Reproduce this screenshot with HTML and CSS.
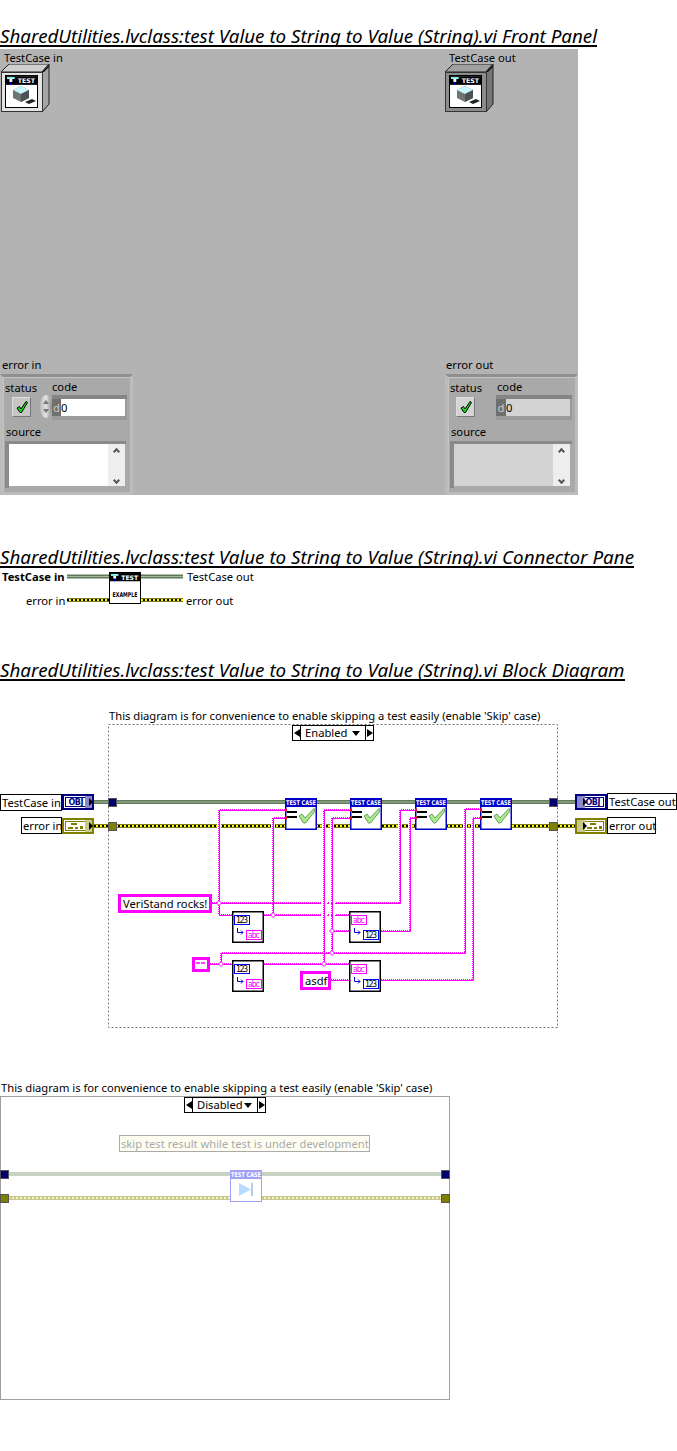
FILE: index.html
```html
<!DOCTYPE html>
<html lang="en">
<head>
<meta charset="utf-8">
<title>SharedUtilities.lvclass:test Value to String to Value (String).vi</title>
<link rel="stylesheet" href="styles.css">
</head>
<body>
<svg class="defs" width="0" height="0" aria-hidden="true">
  <defs>
    <symbol id="ticon" viewBox="0 0 32 9">
      <rect width="32" height="9" fill="#000"/>
      <rect x="1" y="1" width="8" height="2" fill="#9ff"/>
      <rect x="3.500" y="3" width="3" height="3" fill="#fff"/>
      <rect x="3.500" y="6" width="2" height="3" fill="#00c"/>
      <text x="12" y="7" class="micro" fill="#fff" textLength="18" lengthAdjust="spacingAndGlyphs">TEST</text>
    </symbol>
    <symbol id="box3d" viewBox="0 0 49 48">
      <path d="M0 8 8 0H48L41 8Z" class="box-top" stroke="#222"/>
      <path d="M41 8 48 0V40L41 48Z" class="box-side" stroke="#222"/>
      <path d="M41 8 48 1V3L43 8Z" fill="#111"/>
      <rect x=".5" y="8.500" width="41" height="39" class="box-face" stroke="#333"/>
      <rect x="4.500" y="11.500" width="32" height="32" fill="#fff" stroke="#000"/>
      <use href="#ticon" x="5" y="12" width="31" height="9"/>
      <path d="M20 22 28 26V34L20 38 12 34V26Z" fill="#6f7474"/>
      <path d="M20 22 28 26 20 30 12 26Z" fill="#c6f7fb"/>
      <path d="M20 30 28 26V34L20 38Z" fill="#4d5252"/>
      <path d="M24 38 31 35 35 37 28 40Z" fill="#222"/>
    </symbol>
    <symbol id="node-tc" viewBox="0 0 32 32">
      <rect x=".75" y=".75" width="30.500" height="30.500" fill="#fff" stroke="#0000c8" stroke-width="1.500"/>
      <rect width="32" height="9" fill="#0000c8"/>
      <text x="16" y="7" class="micro" text-anchor="middle" fill="#fff" textLength="30" lengthAdjust="spacingAndGlyphs">TEST CASE</text>
      <rect x="2" y="13" width="10" height="2" fill="#000"/>
      <rect x="2" y="18" width="10" height="2" fill="#000"/>
      <path d="M14 18 17 16 20 20 29 10.500 30 13 20.500 25H18.500Z" fill="#a6ea8a" stroke="#6f9a60"/>
      <rect x="0" y="10.500" width="2" height="3" fill="#f00"/>
      <rect x="0" y="18.500" width="2" height="3" fill="#f00"/>
    </symbol>
    <symbol id="node-num" viewBox="0 0 32 32">
      <rect x=".75" y=".75" width="30.500" height="30.500" fill="#fff" stroke="#000" stroke-width="1.500"/>
      <rect x="2.500" y="4.500" width="15" height="9" fill="#fff" stroke="#00f"/>
      <text x="10" y="12" class="tiny" text-anchor="middle" fill="#000" textLength="12">123</text>
      <rect x="14.500" y="19.500" width="15" height="9" fill="#fff" stroke="#f0f"/>
      <text x="22" y="27" class="tiny" text-anchor="middle" fill="#f0f" textLength="12">abc</text>
      <path d="M5.500 17V21.500H11M9 19.500 11 21.500 9 23.500" fill="none" stroke="#00c"/>
    </symbol>
    <symbol id="node-str" viewBox="0 0 32 32">
      <rect x=".75" y=".75" width="30.500" height="30.500" fill="#fff" stroke="#000" stroke-width="1.500"/>
      <rect x="2.500" y="4.500" width="15" height="9" fill="#fff" stroke="#f0f"/>
      <text x="10" y="12" class="tiny" text-anchor="middle" fill="#f0f" textLength="12">abc</text>
      <rect x="14.500" y="19.500" width="15" height="9" fill="#fff" stroke="#00f"/>
      <text x="22" y="27" class="tiny" text-anchor="middle" fill="#000" textLength="12">123</text>
      <path d="M5.500 17V21.500H11M9 19.500 11 21.500 9 23.500" fill="none" stroke="#00c"/>
    </symbol>
    <symbol id="term-obj" viewBox="0 0 32 16">
      <rect x="1" y="1" width="30" height="14" fill="#fff" stroke="#000080" stroke-width="2"/>
      <rect x="3.500" y="3.500" width="21" height="9" fill="#fff" stroke="#000080"/>
      <rect x="23" y="2" width="7" height="12" fill="#8a8ac8"/>
      <text x="14" y="11" class="micro obj" text-anchor="middle" fill="#000080" textLength="15">OBJ</text>
      <path d="M27 4 31 8 27 12Z" fill="#000"/>
    </symbol>
    <symbol id="term-obj-out" viewBox="0 0 32 16">
      <rect x="1" y="1" width="30" height="14" fill="#fff" stroke="#000080" stroke-width="2"/>
      <rect x="7.500" y="3.500" width="21" height="9" fill="#fff" stroke="#000080"/>
      <rect x="2" y="2" width="8" height="12" fill="#8a8ac8"/>
      <text x="18" y="11" class="micro obj" text-anchor="middle" fill="#000080" textLength="15">OBJ</text>
      <path d="M8 4 12 8 8 12Z" fill="#000"/>
    </symbol>
    <symbol id="term-err" viewBox="0 0 32 16">
      <rect x="1" y="1" width="30" height="14" fill="#fff" stroke="#808000" stroke-width="2"/>
      <rect x="3.500" y="3.500" width="21" height="9" fill="#fff" stroke="#808000"/>
      <rect x="23" y="2" width="7" height="12" fill="#c8c88a"/>
      <path d="M9 5H15V7H9ZM6 9H11V11H6ZM13 9H16V11H13ZM18 8H21V11H18Z" fill="#808000"/>
      <path d="M27 4 31 8 27 12Z" fill="#000"/>
    </symbol>
    <symbol id="term-err-out" viewBox="0 0 32 16">
      <rect x="1" y="1" width="30" height="14" fill="#fff" stroke="#808000" stroke-width="2"/>
      <rect x="7.500" y="3.500" width="21" height="9" fill="#fff" stroke="#808000"/>
      <rect x="2" y="2" width="8" height="12" fill="#c8c88a"/>
      <path d="M15 5H21V7H15ZM12 9H17V11H12ZM19 9H22V11H19ZM24 8H27V11H24Z" fill="#808000"/>
      <path d="M8 4 12 8 8 12Z" fill="#000"/>
    </symbol>
    <symbol id="check" viewBox="0 0 12 12">
      <path d="M1 7 3.500 5.500 5 8 10 0.500 11.500 1.500 5.500 11.500H4Z" fill="#10e010" stroke="#000"/>
    </symbol>
    <path id="pink" d="M212 903H400V810H415M219 903V810H285M219 903V915H232M264 915H349M273 915V818H285M381 931H410V818H415M332 931H349M332 953V818H350M210 964H232M221 964V953H465V809H480M264 964H349M324 964V810H350M331 980H349M381 980H473V818H480"/>
  </defs>
</svg>

<h2 class="title"><span>SharedUtilities.lvclass:test Value to String to Value (String).vi Front Panel</span></h2>
<section class="panel">
  <div class="lbl lbl-tin">TestCase in</div>
  <svg class="box box-in"><use href="#box3d"/></svg>
  <div class="lbl lbl-tout">TestCase out</div>
  <svg class="box box-out"><use href="#box3d"/></svg>

  <div class="lbl lbl-ein">error in</div>
  <div class="cluster cluster-in">
    <div class="lbl c-status">status</div>
    <div class="lbl c-code">code</div>
    <div class="led"><svg class="check"><use href="#check"/></svg></div>
    <div class="spin"><i class="spin-up"></i><i class="spin-down"></i></div>
    <div class="numeric"><span class="radix">d</span><span class="value">0</span></div>
    <div class="lbl c-source">source</div>
    <div class="strbox"><div class="scroll"><i class="up"></i><i class="down"></i></div></div>
  </div>

  <div class="lbl lbl-eout">error out</div>
  <div class="cluster cluster-out">
    <div class="lbl c-status">status</div>
    <div class="lbl c-code">code</div>
    <div class="led"><svg class="check"><use href="#check"/></svg></div>
    <div class="numeric"><span class="radix">d</span><span class="value">0</span></div>
    <div class="lbl c-source">source</div>
    <div class="strbox"><div class="scroll"><i class="up"></i><i class="down"></i></div></div>
  </div>
</section>

<h2 class="title title-2"><span>SharedUtilities.lvclass:test Value to String to Value (String).vi Connector Pane</span></h2>
<section class="pane">
  <svg class="wires" viewBox="0 568 677 44">
    <path class="w-class" d="M67 576.500H183"/><path class="w-class-in" d="M67 576.500H183"/>
    <path class="w-err" d="M67 600H183"/><path class="w-err-y" d="M67 600H183"/><path class="w-err-k" d="M67 600H183"/>
    <rect x="109.500" y="572.500" width="31" height="31" fill="#fff" stroke="#000"/>
    <use href="#ticon" x="110" y="573" width="30" height="8.500"/>
    <text x="125" y="597" class="micro" text-anchor="middle" fill="#000" textLength="25" lengthAdjust="spacingAndGlyphs">EXAMPLE</text>
  </svg>
  <div class="lbl p-tin">TestCase in</div>
  <div class="lbl p-tout">TestCase out</div>
  <div class="lbl p-ein">error in</div>
  <div class="lbl p-eout">error out</div>
</section>

<h2 class="title title-3"><span>SharedUtilities.lvclass:test Value to String to Value (String).vi Block Diagram</span></h2>
<section class="diagram d-enabled">
  <svg class="wires" viewBox="0 700 677 340">
    <rect x="108.500" y="724.500" width="449" height="303" fill="none" stroke="#777" stroke-dasharray="2 2"/>
    <path class="w-class" d="M94 802H575"/><path class="w-class-in" d="M94 802H575"/>
    <path class="w-err" d="M94 826H575"/><path class="w-err-y" d="M94 826H575"/><path class="w-err-k" d="M94 826H575"/>
    <path class="w-gap" d="M219 822V830M273 822V830M324 822V830M332 822V830M400 822V830M410 822V830M465 822V830M473 822V830"/>
    <use href="#pink" class="p-solid" transform="translate(.5 .5)"/>
    <use href="#pink" class="p-dot"/>
    <path class="w-gap-h" d="M321 903H323M325 903H327M329 903H331M333 903H335M321 915H323M325 915H327M329 915H331M333 915H335"/>
    <g class="junctions">
      <path d="M219 900.500 221.500 903 219 905.500 216.500 903Z"/>
      <path d="M273 912.500 275.500 915 273 917.500 270.500 915Z"/>
      <path d="M332 928.500 334.500 931 332 933.500 329.500 931Z"/>
      <path d="M332 950.500 334.500 953 332 955.500 329.500 953Z"/>
      <path d="M221 961.500 223.500 964 221 966.500 218.500 964Z"/>
      <path d="M324 961.500 326.500 964 324 966.500 321.500 964Z"/>
    </g>
    <rect class="t-navy" x="108.500" y="798.500" width="8" height="8"/>
    <rect class="t-olive" x="108.500" y="822.500" width="8" height="8"/>
    <rect class="t-navy" x="549.500" y="798.500" width="8" height="8"/>
    <rect class="t-olive" x="549.500" y="822.500" width="8" height="8"/>
    <use href="#node-tc" x="285" y="798" width="32" height="32"/>
    <use href="#node-tc" x="350" y="798" width="32" height="32"/>
    <use href="#node-tc" x="415" y="798" width="32" height="32"/>
    <use href="#node-tc" x="480" y="798" width="32" height="32"/>
    <use href="#node-num" x="232" y="911" width="32" height="32"/>
    <use href="#node-num" x="232" y="960" width="32" height="32"/>
    <use href="#node-str" x="349" y="911" width="32" height="32"/>
    <use href="#node-str" x="349" y="960" width="32" height="32"/>
    <use href="#term-obj" x="62" y="794" width="32" height="16"/>
    <use href="#term-err" x="62" y="818" width="32" height="16"/>
    <use href="#term-obj-out" x="575" y="794" width="32" height="16"/>
    <use href="#term-err-out" x="575" y="818" width="32" height="16"/>
    <rect x="193.500" y="958.500" width="15" height="12" fill="#fff" stroke="#f0f" stroke-width="3"/>
    <path d="M197 962V964M199 962V964M202 962V964M204 962V964" stroke="#f0f" stroke-width="1.500"/>
  </svg>
  <div class="lbl note n-1">This diagram is for convenience to enable skipping a test easily (enable 'Skip' case)</div>
  <div class="selector sel-1"><i class="prev"></i><b>Enabled<i class="drop"></i></b><i class="next"></i></div>
  <div class="tag t-tin">TestCase in</div>
  <div class="tag t-ein">error in</div>
  <div class="tag t-tout">TestCase out</div>
  <div class="tag t-eout">error out</div>
  <div class="const c-vs">VeriStand rocks!</div>
  <div class="const c-as">asdf</div>
</section>

<section class="diagram d-disabled">
  <svg class="wires" viewBox="0 1075 677 330">
    <rect x=".5" y="1096.500" width="449" height="303" fill="#fff" stroke="#a0a0a0"/>
    <path class="w-pale" d="M8 1174H442"/>
    <path class="w-pale-e" d="M8 1198H442"/><path class="w-pale-k" d="M8 1198H442"/>
    <rect class="t-navy" x=".5" y="1170.500" width="8" height="8"/>
    <rect class="t-olive" x=".5" y="1194.500" width="8" height="8"/>
    <rect class="t-navy" x="441.500" y="1170.500" width="8" height="8"/>
    <rect class="t-olive" x="441.500" y="1194.500" width="8" height="8"/>
    <rect x="230.500" y="1170.500" width="31" height="31" fill="#fff" stroke="#a0a0f4"/>
    <rect x="230" y="1170" width="32" height="9" fill="#a0a0f4"/>
    <text x="246" y="1177" class="micro" text-anchor="middle" fill="#fff" textLength="30" lengthAdjust="spacingAndGlyphs">TEST CASE</text>
    <path d="M239 1183 251 1189.500 239 1196Z" fill="#b8dcff"/>
    <rect x="251" y="1183" width="2" height="13" fill="#b8c8f0"/>
  </svg>
  <div class="lbl note n-2">This diagram is for convenience to enable skipping a test easily (enable 'Skip' case)</div>
  <div class="selector sel-2"><i class="prev"></i><b>Disabled<i class="drop"></i></b><i class="next"></i></div>
  <div class="skip">skip test result while test is under development</div>
</section>
</body>
</html>
```
FILE: styles.css
```css
* { box-sizing: border-box; }
html, body { margin: 0; padding: 0; background: #fff; }
body {
  width: 677px;
  height: 1451px;
  overflow: hidden;
  padding-top: 26px;
  color: #000;
  font-family: "Noto Sans", "Open Sans", sans-serif;
  font-size: 11.200px;
}
.defs { position: absolute; }

.title {
  margin: 0;
  height: 21px;
  font-size: 18.800px;
  font-style: italic;
  font-weight: 400;
  line-height: 20px;
  white-space: nowrap;
}
.title span { display: inline-block; height: 21px; border-bottom: 2px solid #000; }
.title-2 { margin-top: 52px; }
.title-3 { margin-top: 48px; }

.lbl { position: absolute; white-space: nowrap; line-height: 14px; }

/* front panel */
.panel {
  position: relative;
  width: 578px;
  height: 446px;
  margin-top: 2px;
  background: #b3b3b3;
}
.box { position: absolute; top: 15px; width: 49px; height: 48px; --face: #e4e4e4; --side: #a5a5a5; --top: #cfcfcf; }
.box-in { left: 1px; }
.box-out { left: 445px; --face: #8c8c8c; --side: #777; --top: #a0a0a0; }
.box-top { fill: var(--top); }
.box-side { fill: var(--side); }
.box-face { fill: var(--face); }

.lbl-tin { left: 4px; top: 2px; }
.lbl-tout { left: 449px; top: 2px; }
.lbl-ein { left: 2px; top: 309px; }
.lbl-eout { left: 446px; top: 309px; }

.cluster {
  position: absolute;
  top: 325px;
  width: 133px;
  height: 121px;
  background: #a9a9a9;
  border: 3px solid;
  border-color: #8f8f8f #bcbcbc #bcbcbc #bcbcbc;
  box-shadow: inset 1px 1px 0 #c4c4c4;
}
.cluster-in { left: 0; }
.cluster-out { left: 445px; }
.c-status { left: 2px; top: 4px; }
.c-code { left: 49px; top: 3px; }
.c-source { left: 3px; top: 48px; }
.led {
  position: absolute;
  left: 9px;
  top: 20px;
  width: 19px;
  height: 20px;
  background: #c6c6c6;
  border: 1px solid;
  border-color: #dedede #777 #777 #dedede;
  display: flex;
  align-items: center;
  justify-content: center;
}
.check { width: 12px; height: 12px; }
.cluster-out .led { left: 8px; background: #d4d4d4; }
.spin {
  position: absolute;
  left: 37px;
  top: 18px;
  width: 12px;
  height: 23px;
  border-radius: 50%;
  background: linear-gradient(90deg, #bbb, #e4e4e4 50%, #8b8b8b);
  display: flex;
  flex-direction: column;
  align-items: center;
  justify-content: space-between;
  padding: 5px 0;
}
.spin-up { border: 3px solid transparent; border-top: 0; border-bottom: 4px solid #777; }
.spin-down { border: 3px solid transparent; border-bottom: 0; border-top: 4px solid #777; }
.numeric {
  position: absolute;
  left: 49px;
  top: 18px;
  width: 75px;
  height: 25px;
  display: flex;
  align-items: flex-start;
  padding-top: 4px;
  background: #9a9a9a;
  box-shadow: inset 0 4px 0 #858585;
}
.radix { width: 9px; height: 17px; background: #6f6f6f; color: #ccc; line-height: 17px; text-align: center; }
.value { width: 64px; height: 17px; background: #fff; line-height: 17px; color: #000; }
.cluster-out .numeric { left: 48px; width: 76px; }
.cluster-out .radix { width: 10px; }
.cluster-out .value { background: #d3d3d3; }
.strbox {
  position: absolute;
  left: 2px;
  top: 64px;
  width: 121px;
  height: 47px;
  padding: 3px 1px 2px 4px;
  background: #fff;
  background-clip: content-box;
  display: flex;
  justify-content: flex-end;
  box-shadow: inset 4px 3px 0 #8a8a8a, inset -1px -2px 0 #a9a9a9;
}
.cluster-out .strbox { background-color: #d3d3d3; left: 2px; width: 122px; padding-right: 2px; }
.scroll {
  position: relative;
  width: 17px;
  background: #eee;
}
.scroll i { position: absolute; left: 6px; width: 5px; height: 5px; border: solid #555; border-width: 2px 0 0 2px; transform: rotate(45deg); }
.scroll .up { top: 5px; }
.scroll .down { bottom: 3px; transform: rotate(225deg); }

/* connector pane */
.pane { position: relative; height: 44px; margin-top: 0; }
.wires { position: absolute; left: 0; top: 0; width: 100%; height: 100%; }
.p-tin { left: 2px; top: 2px; font-weight: 700; }
.p-tout { left: 187px; top: 2px; }
.p-ein { left: 26px; top: 26px; }
.p-eout { left: 186px; top: 26px; }

/* wires */
.w-class { fill: none; stroke: #5f7a57; stroke-width: 4; }
.w-class-in { fill: none; stroke: #a8b6a2; stroke-width: 1; }
.w-err { fill: none; stroke: #7e7e14; stroke-width: 4; }
.w-err-y { fill: none; stroke: #ffff00; stroke-width: 2; }
.w-err-k { fill: none; stroke: #000; stroke-width: 2; stroke-dasharray: 2 2; }
.w-gap { fill: none; stroke: #fff; stroke-width: 4; }
.w-gap-h { fill: none; stroke: #fff; stroke-width: 3; }
.p-solid { fill: none; stroke: #f0f; stroke-width: 1; }
.p-dot { fill: none; stroke: #f0f; stroke-width: 2; stroke-dasharray: 1 1; }
.junctions path { fill: #fff; stroke: #f0f; }
.t-navy { fill: #000070; stroke: #555; }
.t-olive { fill: #808000; stroke: #555; }
.w-pale { fill: none; stroke: #c6d2c2; stroke-width: 4; }
.w-pale-e { fill: none; stroke: #c8c890; stroke-width: 4; }
.w-pale-k { fill: none; stroke: #f4f4c0; stroke-width: 2; stroke-dasharray: 2 2; }
.micro { font-family: "DejaVu Sans", sans-serif; font-size: 6.500px; font-weight: 700; }
.obj { font-size: 8px; }
.tiny { font-family: "DejaVu Sans", sans-serif; font-size: 8px; }

/* block diagrams */
.diagram { position: relative; }
.d-enabled { height: 340px; margin-top: 19px; }
.d-disabled { height: 330px; margin-top: 35px; }
.n-1 { left: 109px; top: 9px; }
.n-2 { left: 1px; top: 6px; }
.selector {
  position: absolute;
  display: flex;
  height: 16px;
  border: 1px solid #000;
  background: #fff;
  width: 82px;
}
.selector b {
  flex: 1;
  display: flex;
  align-items: center;
  justify-content: space-between;
  padding: 0 5px 0 4px;
  font-weight: 400;
  border: solid #000;
  border-width: 0 1px;
  line-height: 14px;
}
.sel-1 { left: 292px; top: 25px; }
.sel-2 { left: 184px; top: 22px; }
.prev, .next { width: 7px; display: flex; align-items: center; justify-content: center; }
.prev::before { content: ""; border: 4px solid transparent; border-left: 0; border-right: 6px solid #000; }
.next::before { content: ""; border: 4px solid transparent; border-right: 0; border-left: 6px solid #000; }
.drop { border: 4px solid transparent; border-bottom: 0; border-top: 5px solid #000; }

.tag {
  position: absolute;
  height: 17px;
  padding: 0 1px;
  background: #fff;
  border: 1px solid #000;
  line-height: 15px;
  white-space: nowrap;
}
.t-tin { left: 0; top: 94px; width: 62px; }
.t-ein { left: 21px; top: 117px; width: 41px; }
.t-tout { left: 607px; top: 93px; width: 70px; }
.t-eout { left: 607px; top: 117px; width: 49px; }
.const {
  position: absolute;
  background: #fff;
  border: 3px solid #f0f;
  line-height: 13px;
  white-space: nowrap;
}
.c-vs { left: 118px; top: 194px; width: 94px; height: 19px; padding-left: 2px; }
.c-as { left: 300px; top: 271px; width: 31px; height: 19px; padding-left: 2px; }
.skip {
  position: absolute;
  left: 119px;
  top: 60px;
  width: 251px;
  height: 17px;
  padding-left: 1px;
  background: #fdfdf2;
  border: 1px solid #aaa;
  color: #aaa;
  line-height: 15px;
  white-space: nowrap;
}
```
